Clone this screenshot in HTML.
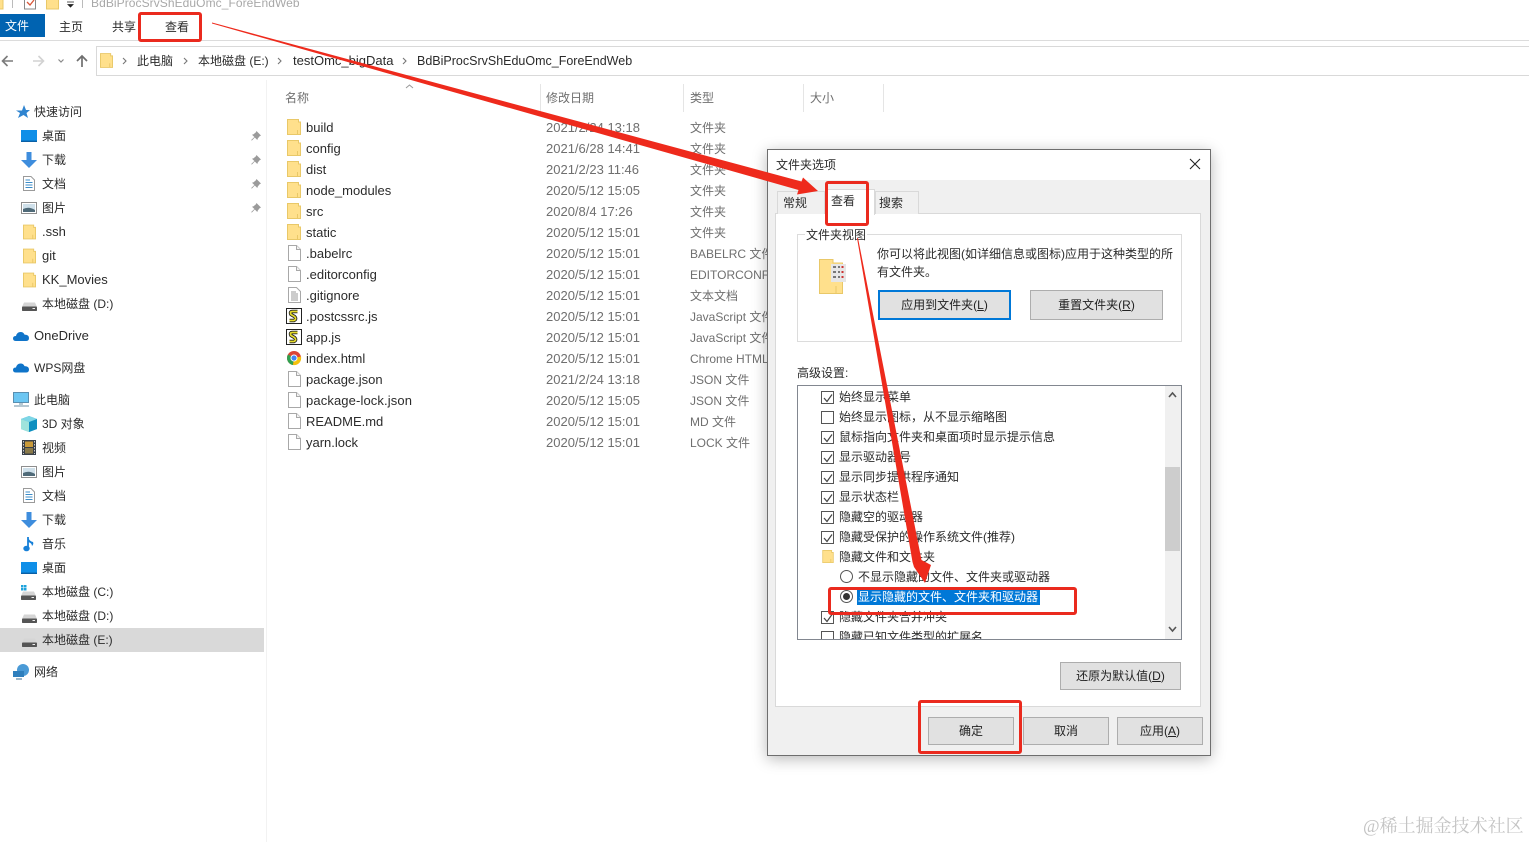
<!DOCTYPE html>
<html lang="zh"><head><meta charset="utf-8"><title>文件夹选项</title>
<style>
html,body{margin:0;padding:0;background:#fff}
#p{position:relative;width:1529px;height:842px;overflow:hidden;background:#fff;font:12px/18px "Liberation Sans","Noto Sans CJK SC",sans-serif;color:#2b2b2b}
#p div{position:absolute}
.t{white-space:nowrap;height:18px;margin-top:1px}
.n{margin-top:0}
.e{font-size:13px}
.g{color:#6f6f6f}
.d{color:#6f6f6f;font-size:13px}
svg{position:absolute;overflow:visible}
.b{background:#e1e1e1;border:1px solid #adadad;box-sizing:border-box;text-align:center;line-height:26px;color:#222}
.r{border:3px solid #ea2a1e;border-radius:3px;box-sizing:border-box}
.c{width:11px;height:11px;margin-top:1px;border:1px solid #555;background:#fff}
.c svg{left:.5px;top:.5px}
.o{width:11px;height:11px;border:1px solid #555;border-radius:50%;background:#fff}
u{text-decoration:underline}
</style></head><body><div id="p">
<svg width="0" height="0" style="position:absolute"><defs>
<symbol id="fo" viewBox="0 0 14 16"><path d="M.5.5H11.5V3H13.5V15.5H.5Z" fill="#ffe08c" stroke="#e9c868"/><path d="M10.5 11V15" stroke="#e9c868"/></symbol>
<symbol id="doc" viewBox="0 0 13 16"><path d="M.5.5H8.5L12.5 4.5V15.5H.5Z" fill="#fff" stroke="#a8a8a8"/><path d="M8.5.5V4.5H12.5" fill="#f2f2f2" stroke="#a8a8a8"/></symbol>
<symbol id="txt" viewBox="0 0 13 16"><path d="M.5.5H8.5L12.5 4.5V15.5H.5Z" fill="#fff" stroke="#a8a8a8"/><path d="M3 5H8M3 7H10M3 9H10M3 11H10M3 13H10" stroke="#999"/></symbol>
<symbol id="js" viewBox="0 0 16 16"><rect x=".5" y=".5" width="15" height="15" fill="#fff" stroke="#222"/><path d="M11.5 3.5H6.5Q3.5 3.5 5 6.5L8.5 8.5Q11 11 8 12.5H3.5" fill="none" stroke="#222" stroke-width="3.4"/><path d="M11.5 3.5H6.5Q3.5 3.5 5 6.5L8.5 8.5Q11 11 8 12.5H3.5" fill="none" stroke="#e6dc2c" stroke-width="1.7"/></symbol>
<symbol id="ck" viewBox="0 0 10 10"><path d="M1 5L4 8.5L9 1.5" fill="none" stroke="#444" stroke-width="1.2"/></symbol>
<symbol id="desk" viewBox="0 0 16 12"><rect width="16" height="12" fill="#0f8fe8"/><rect y="10.6" width="16" height="1.4" fill="#0a5fa5"/></symbol>
<symbol id="dl" viewBox="0 0 16 16"><path d="M5.5 0H10.5V8H16L8 16L0 8H5.5Z" fill="#3e8ddd"/></symbol>
<symbol id="dc" viewBox="0 0 12 15"><path d="M.5.5H8L11.5 4V14.5H.5Z" fill="#fff" stroke="#9a9a9a"/><path d="M2.5 4H7M2.5 6.5H9.5M2.5 9H9.5M2.5 11.5H9.5" stroke="#3c8cc8"/></symbol>
<symbol id="pic" viewBox="0 0 16 12"><rect x=".5" y=".5" width="15" height="11" fill="#fff" stroke="#8e8e8e"/><rect x="2" y="2" width="12" height="8" fill="#cfe0ea"/><path d="M2 7Q8 4 14 8V10H2Z" fill="#4f6a78"/></symbol>
<symbol id="hd" viewBox="0 0 15 9"><path d="M2 .5H13L15 5H0Z" fill="#d5d5d5"/><rect y="4.5" width="15" height="4.5" rx=".8" fill="#555"/><rect x="10.5" y="6" width="2.5" height="1" fill="#eee"/></symbol>
<symbol id="pin" viewBox="0 0 10 10"><path d="M5.5 0L10 4.5L8.6 5.2L6.8 7.5L6.3 9L3.8 6.5L.8 9.6L.2 9L3.4 6L1 3.7L2.6 3.2L4.8 1.4Z" fill="#9b9b9b"/></symbol>
<symbol id="cloud" viewBox="0 0 16 10"><path d="M3 10Q0 10 0 7.4Q0 5 3 5Q4 1 7.5 1Q10.5 1 11.5 3.6Q16 3.6 16 7Q16 10 13 10Z" fill="#0f74c9"/></symbol>
</defs></svg>

<!-- title strip -->
<svg style="left:0;top:0" width="100" height="10"><rect x="-4" y="-6" width="7" height="15" fill="#ffe08c" stroke="#e9c868"/><path d="M12.5 0V8" stroke="#bbb"/><rect x="24.5" y="-6" width="11" height="15" fill="#fff" stroke="#888"/><path d="M27 2L30 5L34 0" fill="none" stroke="#d9573a" stroke-width="1.3"/><rect x="46.5" y="-6" width="12" height="15" fill="#ffe08c" stroke="#e9c868"/><path d="M67 2H74M68 4.5H73L70.5 7Z" fill="#222" stroke="#222" stroke-width=".8"/><path d="M82.5 0V8" stroke="#bbb"/></svg>
<div class="t n" style="left:91px;top:-6px;color:#a8a8a8;letter-spacing:.07px">BdBiProcSrvShEduOmc_ForeEndWeb</div>

<!-- ribbon -->
<div style="left:0;top:14px;width:45px;height:23px;background:#0063b1"></div>
<div class="t" style="left:5px;top:16px;color:#fff">文件</div>
<div class="t n" style="left:59px;top:18px">主页</div>
<div class="t n" style="left:112px;top:18px">共享</div>
<div class="t n" style="left:165px;top:18px">查看</div>
<div style="left:0;top:40px;width:1529px;height:1px;background:#dcdcdc"></div>

<!-- nav -->
<svg style="left:0;top:50px" width="96" height="22"><path d="M13 11H3M7.5 6L2.5 11L7.5 16" fill="none" stroke="#7b7b7b" stroke-width="1.6"/><path d="M33 11H43M38.5 6L43.5 11L38.5 16" fill="none" stroke="#d2d2d2" stroke-width="1.6"/><path d="M58.5 9.5L61 12L63.5 9.5" fill="none" stroke="#8a8a8a" stroke-width="1.2"/><path d="M82 17V6M77 11L82 6L87 11" fill="none" stroke="#6f6f6f" stroke-width="1.7"/></svg>
<div style="left:96px;top:46px;width:1433px;height:30px;border:1px solid #d9d9d9;border-right:0;box-sizing:border-box"></div>
<svg style="left:100px;top:52px" width="13" height="17"><use href="#fo" width="13" height="17"/></svg>
<svg style="left:0;top:0" width="460" height="80"><path d="M123 58L126 61L123 64M184 58L187 61L184 64M278 58L281 61L278 64M403 58L406 61L403 64" fill="none" stroke="#777" stroke-width="1.1"/></svg>
<div class="t n" style="left:137px;top:52px">此电脑</div>
<div class="t n" style="left:198px;top:52px">本地磁盘 (E:)</div>
<div class="t n e" style="left:293px;top:52px">testOmc_bigData</div>
<div class="t n" style="left:417px;top:52px;font-size:12.5px">BdBiProcSrvShEduOmc_ForeEndWeb</div>

<!-- sidebar -->
<div style="left:266px;top:80px;width:1px;height:762px;background:#f2f2f2"></div>
<div style="left:0;top:628px;width:264px;height:24px;background:#d9d9d9"></div>
<svg style="left:16px;top:105px" width="14" height="14"><path d="M8 0L10 5H14L10.500 8L12 13L7.500 10L2 13L4 8L0 5.500H6Z" fill="#2f84d0"/></svg>
<div class="t" style="left:34px;top:102px">快速访问</div>
<svg style="left:21px;top:130px" width="16" height="12"><use href="#desk" width="16" height="12"/></svg><div class="t" style="left:42px;top:126px">桌面</div>
<svg style="left:21px;top:152px" width="16" height="16"><use href="#dl" width="16" height="16"/></svg><div class="t" style="left:42px;top:150px">下载</div>
<svg style="left:23px;top:176px" width="12" height="15"><use href="#dc" width="12" height="15"/></svg><div class="t" style="left:42px;top:174px">文档</div>
<svg style="left:21px;top:202px" width="16" height="12"><use href="#pic" width="16" height="12"/></svg><div class="t" style="left:42px;top:198px">图片</div>
<svg style="left:23px;top:224px" width="13" height="16"><use href="#fo" width="13" height="16"/></svg><div class="t e" style="left:42px;top:222px">.ssh</div>
<svg style="left:23px;top:248px" width="13" height="16"><use href="#fo" width="13" height="16"/></svg><div class="t e" style="left:42px;top:246px">git</div>
<svg style="left:23px;top:272px" width="13" height="16"><use href="#fo" width="13" height="16"/></svg><div class="t e" style="left:42px;top:270px">KK_Movies</div>
<svg style="left:22px;top:302px" width="15" height="9"><use href="#hd" width="15" height="9"/></svg><div class="t" style="left:42px;top:294px">本地磁盘 (D:)</div>
<svg style="left:251px;top:131px" width="10" height="10"><use href="#pin" width="10" height="10"/></svg>
<svg style="left:251px;top:155px" width="10" height="10"><use href="#pin" width="10" height="10"/></svg>
<svg style="left:251px;top:179px" width="10" height="10"><use href="#pin" width="10" height="10"/></svg>
<svg style="left:251px;top:203px" width="10" height="10"><use href="#pin" width="10" height="10"/></svg>
<svg style="left:13px;top:331px" width="16" height="10"><use href="#cloud" width="16" height="10"/></svg><div class="t e" style="left:34px;top:326px">OneDrive</div>
<svg style="left:13px;top:362px" width="16" height="11"><use href="#cloud" width="16" height="11"/></svg><div class="t" style="left:34px;top:358px">WPS网盘</div>
<svg style="left:13px;top:392px" width="17" height="15"><rect x=".5" y=".5" width="15" height="10" fill="#6cc6f2" stroke="#5a8fb0"/><path d="M6 12H10M1 14H16" stroke="#9db5c4" stroke-width="1.500"/></svg><div class="t" style="left:34px;top:390px">此电脑</div>
<svg style="left:21px;top:416px" width="16" height="16"><path d="M8 0L16 3V13L8 16L0 13V3Z" fill="#2aa7c9"/><path d="M8 6L16 3V13L8 16Z" fill="#0d8fc0"/><path d="M8 6L0 3L8 0L16 3Z" fill="#7ed6e6"/><path d="M0 3L8 6V16L0 13Z" fill="#9fe3dc"/></svg><div class="t" style="left:42px;top:414px">3D 对象</div>
<svg style="left:22px;top:440px" width="14" height="15"><rect width="14" height="15" fill="#3a4048"/><rect x="3" y="1.500" width="8" height="5.500" fill="#c99a3a"/><rect x="3" y="8" width="8" height="5.500" fill="#8a7a4a"/><path d="M1.500 1V14M12.500 1V14" stroke="#ccc" stroke-dasharray="1.500 1.500"/></svg><div class="t" style="left:42px;top:438px">视频</div>
<svg style="left:21px;top:466px" width="16" height="12"><use href="#pic" width="16" height="12"/></svg><div class="t" style="left:42px;top:462px">图片</div>
<svg style="left:23px;top:488px" width="12" height="15"><use href="#dc" width="12" height="15"/></svg><div class="t" style="left:42px;top:486px">文档</div>
<svg style="left:21px;top:512px" width="16" height="16"><use href="#dl" width="16" height="16"/></svg><div class="t" style="left:42px;top:510px">下载</div>
<svg style="left:23px;top:536px" width="12" height="16"><path d="M5 1V12" stroke="#1780d8" stroke-width="1.800"/><ellipse cx="3.500" cy="12.500" rx="3.200" ry="2.800" fill="#1780d8"/><path d="M5 1Q6 5 10 6Q11 8 9 10Q9 7 5 6Z" fill="#1780d8"/></svg><div class="t" style="left:42px;top:534px">音乐</div>
<svg style="left:21px;top:562px" width="16" height="12"><use href="#desk" width="16" height="12"/></svg><div class="t" style="left:42px;top:558px">桌面</div>
<svg style="left:21px;top:585px" width="15" height="15"><rect width="2.500" height="2.500" fill="#1fa3dc"/><rect x="3" width="2.500" height="2.500" fill="#1fa3dc"/><rect y="3" width="2.500" height="2.500" fill="#1fa3dc"/><rect x="3" y="3" width="2.500" height="2.500" fill="#1fa3dc"/><use href="#hd" y="6" width="15" height="9"/></svg><div class="t" style="left:42px;top:582px">本地磁盘 (C:)</div>
<svg style="left:22px;top:614px" width="15" height="9"><use href="#hd" width="15" height="9"/></svg><div class="t" style="left:42px;top:606px">本地磁盘 (D:)</div>
<svg style="left:22px;top:638px" width="15" height="9"><use href="#hd" width="15" height="9"/></svg><div class="t" style="left:42px;top:630px">本地磁盘 (E:)</div>
<svg style="left:13px;top:664px" width="17" height="16"><circle cx="10" cy="6" r="6" fill="#4a9ad6"/><rect y="7" width="11" height="6" fill="#2f7fbd"/><path d="M3 15H9" stroke="#7a9fb8" stroke-width="1.500"/></svg><div class="t" style="left:34px;top:662px">网络</div>

<!-- header -->
<svg style="left:400px;top:82px" width="20" height="8"><path d="M6 6L9.500 3L13 6" fill="none" stroke="#999"/></svg>
<div class="t g" style="left:285px;top:88px">名称</div>
<div class="t g" style="left:546px;top:88px">修改日期</div>
<div class="t g" style="left:690px;top:88px">类型</div>
<div class="t g" style="left:810px;top:88px">大小</div>
<div style="left:540px;top:84px;width:1px;height:28px;background:#e5e5e5"></div>
<div style="left:683px;top:84px;width:1px;height:28px;background:#e5e5e5"></div>
<div style="left:803px;top:84px;width:1px;height:28px;background:#e5e5e5"></div>
<div style="left:883px;top:84px;width:1px;height:28px;background:#e5e5e5"></div>

<!-- files -->
<svg style="left:287px;top:119px" width="15" height="16"><use href="#fo" width="14" height="16"/></svg>
<svg style="left:287px;top:140px" width="15" height="16"><use href="#fo" width="14" height="16"/></svg>
<svg style="left:287px;top:161px" width="15" height="16"><use href="#fo" width="14" height="16"/></svg>
<svg style="left:287px;top:182px" width="15" height="16"><use href="#fo" width="14" height="16"/></svg>
<svg style="left:287px;top:203px" width="15" height="16"><use href="#fo" width="14" height="16"/></svg>
<svg style="left:287px;top:224px" width="15" height="16"><use href="#fo" width="14" height="16"/></svg>
<svg style="left:288px;top:245px" width="13" height="16"><use href="#doc" width="13" height="16"/></svg>
<svg style="left:288px;top:266px" width="13" height="16"><use href="#doc" width="13" height="16"/></svg>
<svg style="left:288px;top:287px" width="13" height="16"><use href="#txt" width="13" height="16"/></svg>
<svg style="left:286px;top:308px" width="16" height="16"><use href="#js" width="16" height="16"/></svg>
<svg style="left:286px;top:329px" width="16" height="16"><use href="#js" width="16" height="16"/></svg>
<svg style="left:287px;top:351px" width="14" height="14"><circle cx="7" cy="7" r="7" fill="#db4437"/><path d="M7 7L1 3.500A7 7 0 0 0 6 14Z" fill="#2fa14f"/><path d="M7 7L6 14A7 7 0 0 0 14 5.500Z" fill="#f4c20d"/><circle cx="7" cy="7" r="3.500" fill="#fff"/><circle cx="7" cy="7" r="2.600" fill="#4285f4"/></svg>
<svg style="left:288px;top:371px" width="13" height="16"><use href="#doc" width="13" height="16"/></svg>
<svg style="left:288px;top:392px" width="13" height="16"><use href="#doc" width="13" height="16"/></svg>
<svg style="left:288px;top:413px" width="13" height="16"><use href="#doc" width="13" height="16"/></svg>
<svg style="left:288px;top:434px" width="13" height="16"><use href="#doc" width="13" height="16"/></svg>

<div class="t e" style="left:306px;top:118px">build</div><div class="t d" style="left:546px;top:118px">2021/2/24 13:18</div><div class="t g" style="left:690px;top:118px">文件夹</div>
<div class="t e" style="left:306px;top:139px">config</div><div class="t d" style="left:546px;top:139px">2021/6/28 14:41</div><div class="t g" style="left:690px;top:139px">文件夹</div>
<div class="t e" style="left:306px;top:160px">dist</div><div class="t d" style="left:546px;top:160px">2021/2/23 11:46</div><div class="t g" style="left:690px;top:160px">文件夹</div>
<div class="t e" style="left:306px;top:181px">node_modules</div><div class="t d" style="left:546px;top:181px">2020/5/12 15:05</div><div class="t g" style="left:690px;top:181px">文件夹</div>
<div class="t e" style="left:306px;top:202px">src</div><div class="t d" style="left:546px;top:202px">2020/8/4 17:26</div><div class="t g" style="left:690px;top:202px">文件夹</div>
<div class="t e" style="left:306px;top:223px">static</div><div class="t d" style="left:546px;top:223px">2020/5/12 15:01</div><div class="t g" style="left:690px;top:223px">文件夹</div>
<div class="t e" style="left:306px;top:244px">.babelrc</div><div class="t d" style="left:546px;top:244px">2020/5/12 15:01</div><div class="t g" style="left:690px;top:244px">BABELRC 文件</div>
<div class="t e" style="left:306px;top:265px">.editorconfig</div><div class="t d" style="left:546px;top:265px">2020/5/12 15:01</div><div class="t g" style="left:690px;top:265px">EDITORCONFIG 文件</div>
<div class="t e" style="left:306px;top:286px">.gitignore</div><div class="t d" style="left:546px;top:286px">2020/5/12 15:01</div><div class="t g" style="left:690px;top:286px">文本文档</div>
<div class="t e" style="left:306px;top:307px">.postcssrc.js</div><div class="t d" style="left:546px;top:307px">2020/5/12 15:01</div><div class="t g" style="left:690px;top:307px">JavaScript 文件</div>
<div class="t e" style="left:306px;top:328px">app.js</div><div class="t d" style="left:546px;top:328px">2020/5/12 15:01</div><div class="t g" style="left:690px;top:328px">JavaScript 文件</div>
<div class="t e" style="left:306px;top:349px">index.html</div><div class="t d" style="left:546px;top:349px">2020/5/12 15:01</div><div class="t g" style="left:690px;top:349px">Chrome HTML</div>
<div class="t e" style="left:306px;top:370px">package.json</div><div class="t d" style="left:546px;top:370px">2021/2/24 13:18</div><div class="t g" style="left:690px;top:370px">JSON 文件</div>
<div class="t e" style="left:306px;top:391px;letter-spacing:.12px">package-lock.json</div><div class="t d" style="left:546px;top:391px">2020/5/12 15:05</div><div class="t g" style="left:690px;top:391px">JSON 文件</div>
<div class="t e" style="left:306px;top:412px">README.md</div><div class="t d" style="left:546px;top:412px">2020/5/12 15:01</div><div class="t g" style="left:690px;top:412px">MD 文件</div>
<div class="t e" style="left:306px;top:433px">yarn.lock</div><div class="t d" style="left:546px;top:433px">2020/5/12 15:01</div><div class="t g" style="left:690px;top:433px">LOCK 文件</div>

<!-- dialog -->
<div style="left:767px;top:149px;width:444px;height:607px;box-sizing:border-box;background:#f0f0f0;border:1px solid #6e6e6e;box-shadow:0 3px 14px rgba(0,0,0,.28)"></div>
<div style="left:768px;top:150px;width:442px;height:30px;background:#fff"></div>
<div class="t n" style="left:776px;top:156px">文件夹选项</div>
<svg style="left:1189px;top:158px" width="12" height="12"><path d="M1 1L11 11M11 1L1 11" stroke="#222" stroke-width="1.100"/></svg>
<div style="left:775px;top:213px;width:426px;height:494px;background:#fff;border:1px solid #d9d9d9;box-sizing:border-box"></div>
<div style="left:777px;top:191px;width:48px;height:23px;background:#f0f0f0;border:1px solid #d9d9d9;border-bottom:0;box-sizing:border-box"></div>
<div style="left:875px;top:191px;width:44px;height:23px;background:#f0f0f0;border:1px solid #d9d9d9;border-bottom:0;box-sizing:border-box"></div>
<div style="left:825px;top:189px;width:50px;height:26px;background:#fff;border:1px solid #d9d9d9;border-bottom:0;box-sizing:border-box"></div>
<div class="t" style="left:783px;top:193px">常规</div>
<div class="t" style="left:831px;top:191px">查看</div>
<div class="t" style="left:879px;top:193px">搜索</div>

<div style="left:797px;top:234px;width:385px;height:108px;border:1px solid #dcdcdc;box-sizing:border-box"></div>
<div class="t" style="left:805px;top:225px;background:#fff;padding:0 1px">文件夹视图</div>
<svg style="left:819px;top:259px" width="28" height="36"><path d="M.5.500H14V4H23.500V34.500H.5Z" fill="#ffe08c" stroke="#e9c868"/><path d="M17 34V27" stroke="#e9c868"/><rect x="12" y="5" width="15" height="18" fill="#e6e6e6"/><path d="M14 8H17M19 8H21M14 13H17M19 13H21M14 18H17M19 18H21" stroke="#777" stroke-width="2"/><path d="M23.500 7V9M23.500 12V14M23.500 17V19" stroke="#c33" stroke-width="2"/></svg>
<div class="t" style="left:877px;top:244px">你可以将此视图(如详细信息或图标)应用于这种类型的所</div>
<div class="t" style="left:877px;top:262px">有文件夹。</div>
<div class="b" style="left:878px;top:290px;width:133px;height:30px;border:2px solid #0078d7">应用到文件夹(<u>L</u>)</div>
<div class="b" style="left:1030px;top:290px;width:133px;height:30px;line-height:28px">重置文件夹(<u>R</u>)</div>
<div class="t" style="left:797px;top:363px">高级设置:</div>

<div style="left:797px;top:385px;width:385px;height:255px;border:1px solid #828790;box-sizing:border-box;overflow:hidden;background:#fff"></div>
<div style="left:1165px;top:386px;width:16px;height:253px;background:#f0f0f0"></div>
<div style="left:1165px;top:467px;width:15px;height:84px;background:#cdcdcd"></div>
<svg style="left:1165px;top:386px" width="16" height="253"><path d="M4 11L7.500 7L11 11M4 241L7.500 245L11 241" fill="none" stroke="#555" stroke-width="1.600"/></svg>

<div class="c" style="left:821px;top:390px"><svg width="10" height="10"><use href="#ck" width="10" height="10"/></svg></div><div class="t" style="left:839px;top:387px">始终显示菜单</div>
<div class="c" style="left:821px;top:410px"></div><div class="t" style="left:839px;top:407px">始终显示图标，从不显示缩略图</div>
<div class="c" style="left:821px;top:430px"><svg width="10" height="10"><use href="#ck" width="10" height="10"/></svg></div><div class="t" style="left:839px;top:427px">鼠标指向文件夹和桌面项时显示提示信息</div>
<div class="c" style="left:821px;top:450px"><svg width="10" height="10"><use href="#ck" width="10" height="10"/></svg></div><div class="t" style="left:839px;top:447px">显示驱动器号</div>
<div class="c" style="left:821px;top:470px"><svg width="10" height="10"><use href="#ck" width="10" height="10"/></svg></div><div class="t" style="left:839px;top:467px">显示同步提供程序通知</div>
<div class="c" style="left:821px;top:490px"><svg width="10" height="10"><use href="#ck" width="10" height="10"/></svg></div><div class="t" style="left:839px;top:487px">显示状态栏</div>
<div class="c" style="left:821px;top:510px"><svg width="10" height="10"><use href="#ck" width="10" height="10"/></svg></div><div class="t" style="left:839px;top:507px">隐藏空的驱动器</div>
<div class="c" style="left:821px;top:530px"><svg width="10" height="10"><use href="#ck" width="10" height="10"/></svg></div><div class="t" style="left:839px;top:527px">隐藏受保护的操作系统文件(推荐)</div>
<svg style="left:822px;top:550px" width="12" height="13"><use href="#fo" width="12" height="13"/></svg><div class="t" style="left:839px;top:547px">隐藏文件和文件夹</div>
<div class="o" style="left:840px;top:570px"></div><div class="t" style="left:858px;top:567px">不显示隐藏的文件、文件夹或驱动器</div>
<div class="o" style="left:840px;top:590px"></div><div style="left:843px;top:593px;width:7px;height:7px;border-radius:50%;background:#333"></div>
<div class="t n" style="left:857px;top:589px;height:16px;line-height:16px;width:183px;padding-left:1px;box-sizing:border-box;background:#0078d7;color:#fff">显示隐藏的文件、文件夹和驱动器</div>
<div class="c" style="left:821px;top:610px"><svg width="10" height="10"><use href="#ck" width="10" height="10"/></svg></div><div class="t" style="left:839px;top:607px">隐藏文件夹合并冲突</div>
<div style="left:798px;top:628px;width:367px;height:11px;overflow:hidden"><div class="c" style="left:23px;top:2px"></div><div class="t" style="left:41px;top:-1px">隐藏已知文件类型的扩展名</div></div>

<div class="b" style="left:1060px;top:662px;width:121px;height:28px">还原为默认值(<u>D</u>)</div>
<div class="b" style="left:928px;top:717px;width:86px;height:28px">确定</div>
<div class="b" style="left:1023px;top:717px;width:86px;height:28px">取消</div>
<div class="b" style="left:1117px;top:717px;width:86px;height:28px">应用(<u>A</u>)</div>

<!-- annotations -->
<div class="r" style="left:138px;top:12px;width:64px;height:30px"></div>
<div class="r" style="left:825px;top:181px;width:44px;height:45px"></div>
<div class="r" style="left:828px;top:587px;width:249px;height:28px"></div>
<div class="r" style="left:918px;top:700px;width:104px;height:54px"></div>
<svg style="left:0;top:0" width="1529" height="842"><polygon points="212,22.500 801.500,181.500 803,177.500 818,191 797,194.500 798.500,190 212,23.500" fill="#ee2a1c"/><polygon points="858,238 921.500,560 931,565 925,583 914,567 912.500,562 857,238" fill="#ee2a1c"/></svg>

<div class="t" style="left:1363px;top:815px;height:20px;font:18px/20px 'Liberation Serif','Noto Serif CJK SC',serif;color:#c4c4c4">@稀土掘金技术社区</div>
</div></body></html>
